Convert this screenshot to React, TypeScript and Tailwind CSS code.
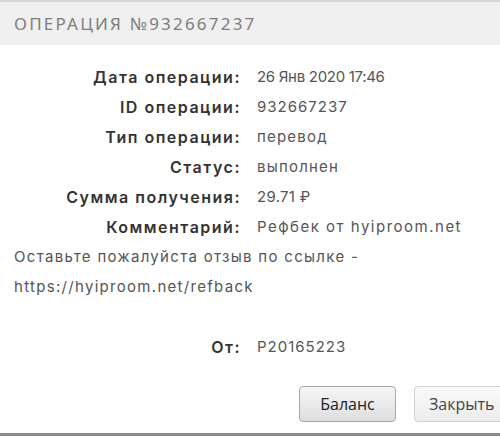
import React from "react";

const rows: [string, string, string][] = [
  ["Дата операции:", "26 Янв 2020 17:46", "tracking-[-0.3px]"],
  ["ID операции:", "932667237", "tracking-[1px]"],
  ["Тип операции:", "перевод", "tracking-[1.2px]"],
  ["Статус:", "выполнен", "tracking-[1.2px]"],
  ["Сумма получения:", "29.71 ₽", "tracking-[0.3px]"],
  ["Комментарий:", "Рефбек от hyiproom.net", "tracking-[1.5px]"],
];

const body = { fontFamily: "Inter, 'Noto Sans', sans-serif" };

export default function App() {
  return (
    <div className="w-[500px] h-[436px] bg-white overflow-hidden flex flex-col" style={body}>
      <div className="h-[2px] bg-[#d4d4d4]" />
      <div className="h-[43px] bg-[#efefef] flex items-center pl-[14px]">
        <span className="text-[17px] tracking-[2.2px] text-[#7e7e7e]" style={{ fontFamily: "'Noto Sans', sans-serif" }}>
          ОПЕРАЦИЯ №932667237
        </span>
      </div>
      <div className="flex-1 flex flex-col pt-[17px]">
        <div className="grid grid-cols-[241px_1fr] gap-x-[16px]">
          {rows.map(([l, v, t]) => (
            <React.Fragment key={l}>
              <div className="text-right leading-[30px] text-[16px] font-semibold tracking-[1.5px] text-[#333]">{l}</div>
              <div className={`leading-[30px] text-[15px] text-[#555] ${t}`}>{v}</div>
            </React.Fragment>
          ))}
        </div>
        <div className="pl-[14px] text-[15px] leading-[30px] text-[#555] tracking-[1.3px]">
          <div>Оставьте пожалуйста отзыв по ссылке -</div>
          <div>https://hyiproom.net/refback</div>
          <div>&nbsp;</div>
        </div>
        <div className="grid grid-cols-[241px_1fr] gap-x-[16px]">
          <div className="text-right leading-[30px] text-[16px] font-semibold tracking-[1.5px] text-[#333]">От:</div>
          <div className="leading-[30px] text-[15px] text-[#555] tracking-[1px]">P20165223</div>
        </div>
        <div className="flex gap-[18px] pl-[299px] mt-[24px]" style={{ fontFamily: "'Open Sans', sans-serif" }}>
          <button className="w-[97px] h-[36px] shrink-0 rounded-[4px] border border-[#a8a8a8] bg-gradient-to-b from-[#f6f6f6] to-[#dedede] text-[16px] text-[#222]">
            Баланс
          </button>
          <button className="w-[100px] h-[36px] shrink-0 rounded-[4px] border border-[#d0d0d0] bg-gradient-to-b from-[#fafafa] to-[#ececec] text-[16px] text-[#444] text-left pl-[14px]">
            Закрыть
          </button>
        </div>
      </div>
      <div className="h-[3px] bg-[#8a8a8a]" />
    </div>
  );
}
